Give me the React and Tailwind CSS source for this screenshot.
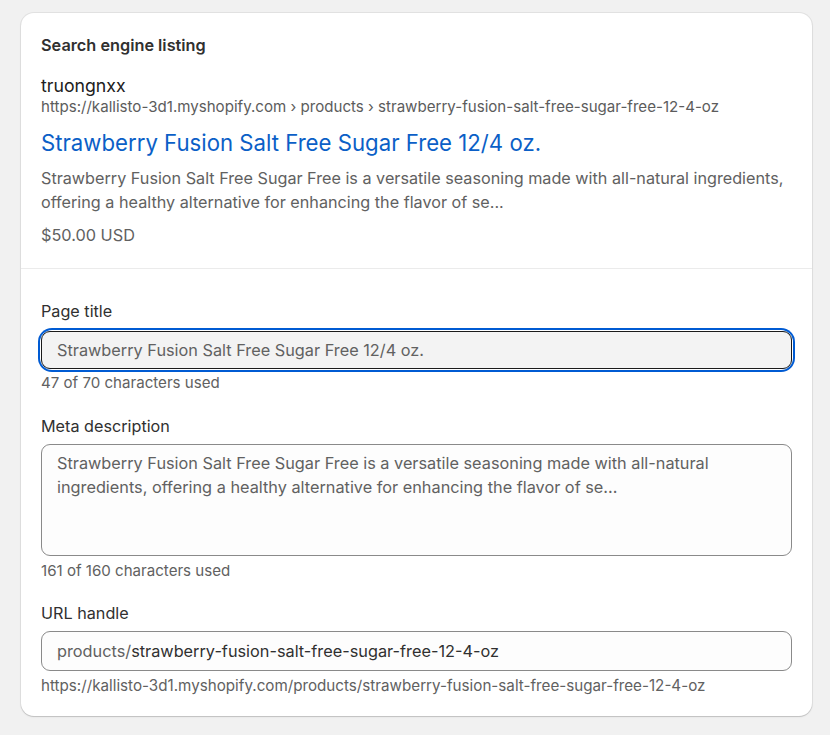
export default function App() {
  return (
    <div className="min-h-screen bg-[#f1f1f1] pt-[13px] pl-[21px] font-['Inter',sans-serif] text-[#303030]">
      <div className="w-[791px] rounded-[13px] bg-white shadow-[0_1px_0_0_rgba(26,26,26,0.07),0_0_0_1px_rgba(0,0,0,0.06),0_1px_2px_rgba(0,0,0,0.1)]">
        <div className="px-5 pt-5 pb-[21px]">
          <h2 className="text-[16.3px] leading-6 font-semibold">Search engine listing</h2>

          <div className="mt-[19px] text-[17.7px] leading-5 text-[#202020]">truongnxx</div>
          <div className="text-[15.1px] leading-[22px] text-[#5c5c5c] whitespace-nowrap">
            https://kallisto-3d1.myshopify.com › products › strawberry-fusion-salt-free-sugar-free-12-4-oz
          </div>
          <div className="mt-[10px] text-[22.2px] leading-[30px] text-[#0b5fc7] whitespace-nowrap">
            Strawberry Fusion Salt Free Sugar Free 12/4 oz.
          </div>
          <p className="mt-2 text-[16.2px] leading-6 text-[#616161] whitespace-nowrap">
            Strawberry Fusion Salt Free Sugar Free is a versatile seasoning made with all-natural ingredients,
            <br />
            offering a healthy alternative for enhancing the flavor of se...
          </p>
          <div className="mt-[9px] text-[16.3px] leading-6 text-[#616161]">$50.00 USD</div>
        </div>

        <div className="border-t border-[#ebebeb] px-5 pt-[30px] pb-[19px]">
          <label className="block text-[16.2px] leading-6 text-[#303030]">Page title</label>
          <div className="mt-2 rounded-[11px] ring-2 ring-[#005bd3] ring-offset-1">
            <div className="flex h-[38px] items-center rounded-[9px] border border-[#1a1a1a] bg-[#f3f3f3] px-[15px] text-[16.3px] text-[#616161]">
              Strawberry Fusion Salt Free Sugar Free 12/4 oz.
            </div>
          </div>
          <div className="mt-[3px] text-[15.1px] leading-[22px] text-[#616161]">47 of 70 characters used</div>

          <label className="mt-5 block text-[16.2px] leading-6 text-[#303030]">Meta description</label>
          <div className="mt-[6px] h-[112px] rounded-[9px] border border-[#8a8a8a] bg-[#fdfdfd] px-[15px] pt-[6px] text-[16.3px] leading-6 text-[#616161]">
            Strawberry Fusion Salt Free Sugar Free is a versatile seasoning made with all-natural
            ingredients, offering a healthy alternative for enhancing the flavor of se...
          </div>
          <div className="mt-1 text-[15.1px] leading-[22px] text-[#616161]">161 of 160 characters used</div>

          <label className="mt-[19px] block text-[16.2px] leading-6 text-[#303030]">URL handle</label>
          <div className="mt-[6px] flex h-[40px] items-center rounded-[9px] border border-[#8a8a8a] bg-[#fdfdfd] px-[15px] text-[16.3px]">
            <span className="text-[#616161]">products/</span>
            <span className="text-[#303030]">strawberry-fusion-salt-free-sugar-free-12-4-oz</span>
          </div>
          <div className="mt-1 text-[15.2px] leading-[22px] text-[#616161] whitespace-nowrap">
            https://kallisto-3d1.myshopify.com/products/strawberry-fusion-salt-free-sugar-free-12-4-oz
          </div>
        </div>
      </div>
    </div>
  );
}
